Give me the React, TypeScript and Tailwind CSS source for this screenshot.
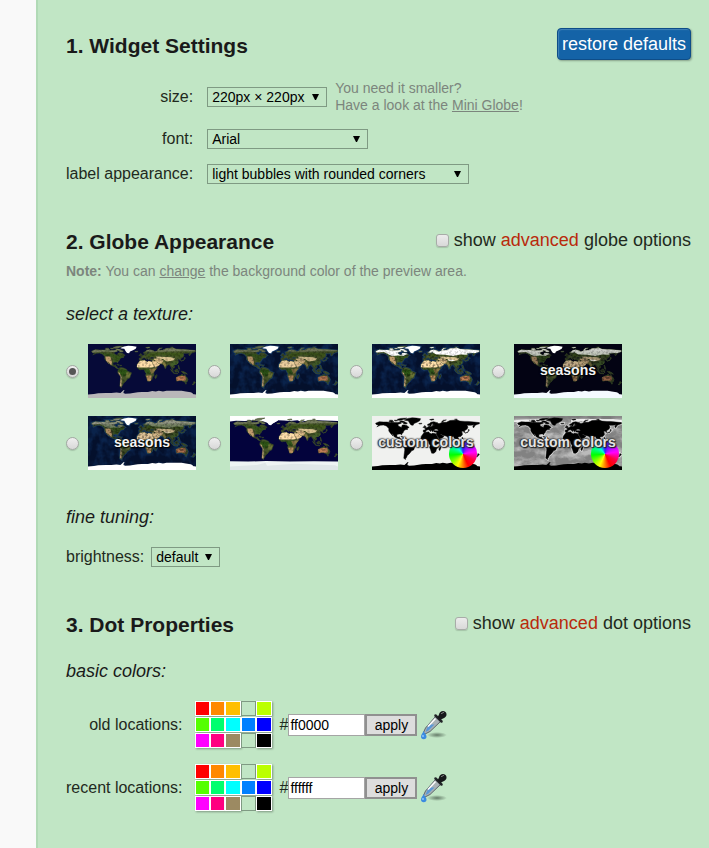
import { useId, type ReactNode } from 'react'

const LAND = [
  // North America
  'M12 24L24 19L38 20L50 20L62 22L72 22L85 22L95 20L98 24L86 28L88 33L98 38L101 30L108 30L116 32L124 38L115 43L120 44L110 46L106 50L104 55L99 60L99 64L96 60L90 60L83 62L83 70L90 71L92 69L92 75L97 76L97 81L102 82L100 83L94 80L88 75L75 70L70 62L66 58L70 67L62 58L56 50L56 42L48 33L38 30L28 31L16 36L22 31L14 28Z',
  // Canadian Arctic islands
  'M56 18L66 17L74 20L64 21ZM58 14L68 14L70 16L60 16ZM74 14L84 14L86 16L78 17ZM84 11L96 8L116 7L108 10L98 14L88 14ZM92 17L104 17L118 24L114 27L104 26L108 23L96 20Z',
  // South America
  'M102 82L108 78L119 80L129 85L130 90L145 96L142 104L139 113L132 116L126 124L122 128L118 131L115 138L112 142L112 145L106 141L107 130L109 115L109 108L102 100L99 95L100 89L103 85Z',
  // Caribbean
  'M96 68L105 70L104 71L97 69ZM107 71L112 71L111 73L107 72Z',
  // Africa
  'M174 54L190 53L191 57L200 60L201 57L212 59L216 66L223 78L231 79L222 90L219 96L220 105L215 110L213 118L207 124L199 124L195 112L192 105L194 98L189 90L189 85L184 84L173 86L167 82L163 76L164 68L170 60Z',
  'M229 102L230 106L226 115L223 113L224 107Z',
  // Eurasia
  'M171 53L171 47L178 47L176 42L182 39L188 36L190 33L195 36L200 35L202 31L210 30L202 29L203 26L205 24L201 26L197 30L198 34L193 34L192 31L186 32L185 28L192 25L196 21L206 19L220 23L217 25L226 25L234 21L248 21L260 15L284 13L293 17L310 18L320 18L340 20L358 22L358 26L350 28L343 32L340 38L337 38L336 33L340 29L330 31L316 31L320 37L317 43L312 47L308 50L309 55L306 54L305 50L301 50L298 51L302 53L299 55L302 60L300 64L296 68L290 69L286 71L289 76L288 79L285 81L281 77L280 78L284 88L283 88L278 80L277 74L274 74L272 68L267 69L260 75L260 80L257 82L253 71L247 67L237 65L230 60L228 60L236 66L240 68L234 73L224 77L219 69L214 60L216 54L207 53L206 50L209 49L222 49L218 45L219 43L213 44L209 43L208 48L204 49L203 53L199 48L194 44L198 50L196 52L189 46L183 47L180 50L178 53Z',
  'M174 40L175 32L178 33L181 38L179 39ZM170 38L173 35L174 37L171 39ZM156 25L166 24L166 26L158 27Z',
  'M192 12L204 10L207 12L198 14ZM232 19L238 14L248 13L240 16L236 20ZM275 11L284 10L283 12Z',
  // Japan, Philippines and Indonesia
  'M310 57L320 54L322 49L325 47L320 45L322 50L318 54ZM300 71L302 72L304 78L306 84L302 83L302 78Z',
  'M275 85L279 87L286 94L285 96L281 93ZM285 97L294 98L300 99L293 99ZM289 88L297 83L299 86L296 94L290 92ZM299 90L304 89L301 92L303 95L300 95ZM311 91L318 92L328 97L331 101L325 98L318 98L313 94Z',
  // Australia, Tasmania and New Zealand
  'M294 112L294 116L296 124L304 122L312 122L318 125L326 129L331 125L333 118L330 112L326 108L323 101L320 107L316 105L316 102L311 102L308 105L303 107ZM325 131L328 131L327 134L325 133ZM353 125L358 128L355 132L351 136L347 135L352 131Z',
].join('')

const GREENLAND =
  'M107 13L120 8L134 6L148 7L162 9L159 16L150 21L140 25L137 31L130 30L125 23L121 16L112 15Z'

const ANTARCTICA =
  'M0 168L20 167L34 164L60 163L78 163L95 162L108 163L112 160L118 154L122 153L119 158L118 163L124 166L140 165L150 163L166 161L180 160L200 160L214 157L226 158L236 156L250 158L262 156L290 156L312 156L326 158L342 161L350 164L348 167L360 168V180H0Z'

type Texture = {
  name: string
  ocean: string
  shelf?: string
  pole: string
  snow?: number
  dim?: number
  caps?: boolean
  mono?: 'plain' | 'relief'
  caption?: string
}

const TEXTURES: Texture[] = [
  { name: 'plain ocean', ocean: '#060a38', pole: '#b9b7b9' },
  { name: 'ocean floor', ocean: '#04102c', shelf: '#1d4a7c', pole: '#ffffff', dim: 0.08 },
  { name: 'ocean floor with snow', ocean: '#04102c', shelf: '#1d4a7c', pole: '#ffffff', snow: 1 },
  { name: 'plain ocean, seasons', ocean: '#030313', pole: '#f4faff', snow: 0.7, dim: 0.25, caption: 'seasons' },
  { name: 'ocean floor, seasons', ocean: '#04102c', shelf: '#1d4a7c', pole: '#ffffff', snow: 0.3, dim: 0.12, caption: 'seasons' },
  { name: 'polar ice', ocean: '#03033c', pole: '#eef4f4', caps: true },
  { name: 'plain custom', ocean: '#f0f1ef', pole: '#000000', mono: 'plain', caption: 'custom colors' },
  { name: 'relief custom', ocean: '#828282', pole: '#000000', mono: 'relief', caption: 'custom colors' },
]

function WorldMap({ texture }: { texture: Texture }) {
  const id = useId().replace(/[^a-zA-Z0-9]/g, '')
  const { ocean, shelf, pole, snow = 0, dim = 0, caps, mono } = texture
  return (
    <svg viewBox="0 0 360 180" className="block h-[54px] w-[108px]" aria-hidden="true">
      <defs>
        <clipPath id={`land${id}`}>
          <path d={LAND} />
        </clipPath>
        <filter id={`soft${id}`} x="-20%" y="-20%" width="140%" height="140%">
          <feGaussianBlur stdDeviation="2" />
        </filter>
        <filter id={`edge${id}`}>
          <feGaussianBlur stdDeviation="1" />
        </filter>
        <filter id={`grain${id}`} x="0" y="0" width="100%" height="100%" colorInterpolationFilters="sRGB">
          <feTurbulence type="fractalNoise" baseFrequency="0.12" numOctaves="2" seed="8" />
          <feColorMatrix values="0 0 0 0 0  0 0 0 0 0  0 0 0 0 0  3 0 0 0 -1.3" />
        </filter>
        <filter id={`relief${id}`} x="0" y="0" width="100%" height="100%" colorInterpolationFilters="sRGB">
          <feTurbulence type="fractalNoise" baseFrequency="0.022 0.035" numOctaves="4" seed="5" />
          <feColorMatrix values="0 0 0 0 1  0 0 0 0 1  0 0 0 0 1  3 0 0 0 -1.2" />
        </filter>
        <filter id={`floor${id}`} x="0" y="0" width="100%" height="100%" colorInterpolationFilters="sRGB">
          <feTurbulence type="fractalNoise" baseFrequency="0.035 0.03" numOctaves="3" seed="3" />
          <feColorMatrix values="0 0 0 0 0.06  0 0 0 0 0.19  0 0 0 0 0.38  3 0 0 0 -1.2" />
        </filter>
      </defs>
      <rect width="360" height="180" fill={ocean} />
      {shelf && (
        <>
          <rect width="360" height="180" filter={`url(#floor${id})`} opacity="0.6" />
          <path d={LAND + GREENLAND} fill="none" stroke={shelf} strokeWidth="6" filter={`url(#soft${id})`} opacity="0.6" />
          <path d="M0 14H360" stroke={shelf} strokeWidth="10" filter={`url(#floor${id})`} opacity="0.4" />
        </>
      )}
      {mono === 'relief' && (
        <>
          <rect width="360" height="180" filter={`url(#relief${id})`} opacity="0.45" />
          <path d={LAND} fill="none" stroke="#ffffff" strokeWidth="7" filter={`url(#soft${id})`} opacity="0.6" />
          <path d="M190 16L250 12L330 14L360 18M0 18L50 16" fill="none" stroke="#ffffff" strokeWidth="8" filter={`url(#soft${id})`} opacity="0.8" />
          <rect width="360" height="9" fill="#777777" opacity="0.7" />
        </>
      )}
      {caps && (
        <path
          d="M0 0H360V17L340 16L310 15L280 13L250 17L236 19L225 14L200 17L180 15L160 14L148 22L136 30L126 23L112 18L80 14L50 17L20 16L0 18Z"
          fill="#ffffff"
          filter={`url(#edge${id})`}
        />
      )}
      {mono ? (
        <path d={LAND + GREENLAND} fill="#000000" stroke="#000000" strokeWidth="1.5" strokeLinejoin="round" />
      ) : (
        <>
          <path d={LAND} fill="#465629" stroke="#3b4b2a" strokeWidth="2" strokeLinejoin="round" />
          <g clipPath={`url(#land${id})`}>
            <g filter={`url(#soft${id})`}>
              {/* tundra */}
              <path d="M0 4H360V24L300 24L240 26L190 25L120 30L60 25L0 30Z" fill="#737a5a" />
              {/* boreal and tropical forest */}
              <path d="M40 30L84 33L120 42L106 50L96 60L88 58L84 44L60 38Z" fill="#37551f" />
              <path d="M190 32L260 28L320 30L312 46L290 40L240 36L200 44Z" fill="#41591f" />
              <path d="M100 84L128 86L134 98L120 108L106 102Z" fill="#2d5517" />
              <path d="M168 82L206 84L212 92L204 100L192 98L186 86Z" fill="#33561a" />
              <path d="M278 60L300 56L300 68L286 72L276 72Z" fill="#45602a" />
              {/* dry land */}
              <path d="M58 42L74 42L80 58L78 70L68 68L60 54Z" fill="#c09c6c" />
              <path d="M158 57L196 54L220 58L226 76L210 78L160 78Z" fill="#ffe0ab" />
              <path d="M212 54L242 62L242 72L224 80L214 66Z" fill="#f2d09a" />
              <path d="M216 48L240 48L252 56L246 66L230 60Z" fill="#d8b985" />
              <path d="M226 42L276 44L290 48L284 55L262 58L250 50L230 48Z" fill="#dcc592" />
              <path d="M246 60L258 62L262 74L254 76Z" fill="#80783f" />
              <path d="M204 84L230 80L220 94L212 100Z" fill="#8c7a44" />
              <path d="M194 106L212 104L210 124L196 124Z" fill="#b98f5c" />
              <path d="M100 94L106 96L112 112L112 142L106 142L106 112Z" fill="#bea078" />
              <path d="M128 94L144 96L138 112L126 112Z" fill="#6b7436" />
              <path d="M292 108L324 106L326 122L294 124Z" fill="#bf7d54" />
            </g>
            <rect width="360" height="180" filter={`url(#grain${id})`} opacity="0.28" />
          </g>
          {dim > 0 && <path d={LAND} fill="#000010" opacity={dim} />}
          {snow > 0 && (
            <g clipPath={`url(#land${id})`}>
              <g filter={`url(#soft${id})`} opacity={snow}>
                <path d="M0 10H124L126 32L112 36L104 40L88 38L66 40L54 34L40 27L10 28Z" fill="#ffffff" />
                <path d="M190 8H360V30L330 31L314 36L296 35L270 40L244 36L214 35L204 29L188 28Z" fill="#ffffff" />
                <path d="M252 52L276 53L270 57L256 56Z" fill="#ffffff" />
              </g>
              <rect width="360" height="180" filter={`url(#grain${id})`} opacity="0.22" />
            </g>
          )}
          <path d={GREENLAND} fill="#ffffff" filter={`url(#edge${id})`} />
        </>
      )}
      <path d={caps ? 'M0 151L60 152L120 150L200 152L280 151L360 152V180H0Z' : ANTARCTICA} fill={pole} filter={`url(#edge${id})`} />
      {caps && <path d="M0 168L90 163L118 156L124 166L214 159L350 164L360 168V180H0Z" fill="#dfe7e8" />}
      {mono && <rect y="170" width="360" height="10" fill="#000000" />}
    </svg>
  )
}

function TextureOption({ texture, selected }: { texture: Texture; selected: boolean }) {
  return (
    <label className="flex items-center gap-[9px]">
      <input
        type="radio"
        name="texture"
        defaultChecked={selected}
        aria-label={texture.name}
        className="grid size-[13px] shrink-0 appearance-none place-items-center rounded-full border border-[#a3a8a3] bg-linear-to-b from-[#efefef] to-[#d8d8d8] shadow-[0_1px_1px_rgba(0,0,0,0.15)] before:size-[7px] before:rounded-full checked:before:bg-[#555555]"
      />
      <span className="relative block overflow-hidden">
        <WorldMap texture={texture} />
        {texture.mono && (
          <span className="absolute right-[3px] bottom-[2px] size-[28px] rounded-full bg-[conic-gradient(#3020ff,#ff00ff_80deg,#ff0040_120deg,#ff0000_155deg,#ffff00_205deg,#00ff00_265deg,#00ffe0_320deg,#3020ff)]" />
        )}
        {texture.caption && (
          <span
            className={
              texture.mono
                ? 'absolute inset-0 text-center text-[14px] leading-[53px] font-bold whitespace-nowrap text-[#e4e4e4] [text-shadow:0_0_2px_#222,0_0_2px_#222,1px_1px_1px_#222,-1px_0_1px_#444]'
                : 'absolute inset-0 text-center text-[14px] leading-[53px] font-bold whitespace-nowrap text-[#f4f4f4] [text-shadow:0_0_2px_#000,1px_1px_1px_#000]'
            }
          >
            {texture.caption}
          </span>
        )}
      </span>
    </label>
  )
}

function Dropdown({ id, value, options, width }: { id: string; value: string; options: string[]; width: string }) {
  return (
    <span className={`relative block h-[20px] ${width}`}>
      <select
        id={id}
        defaultValue={value}
        className="block h-full w-full appearance-none border border-[#7f9a83] bg-transparent pl-1 text-[14px] leading-[18px] text-black"
      >
        {options.map((option) => (
          <option key={option}>{option}</option>
        ))}
      </select>
      <svg viewBox="0 0 7 7" className="pointer-events-none absolute top-[7px] right-[8px] size-[7px]" aria-hidden="true">
        <path d="M0 0H7L4 6H3Z" fill="#000000" />
      </svg>
    </span>
  )
}

function AdvancedToggle({ id, subject }: { id: string; subject: string }) {
  return (
    <div className="flex items-center gap-[5px] text-[18px] leading-[24px]">
      <input
        id={id}
        type="checkbox"
        className="size-[13px] appearance-none rounded-[3px] border border-[#a8aca8] bg-linear-to-b from-[#ececec] to-[#d9d9d9] shadow-[0_1px_1px_rgba(0,0,0,0.15)] checked:bg-[#555555]"
      />
      <label htmlFor={id}>
        show <span className="text-[#b92a0c]">advanced</span> {subject} options
      </label>
    </div>
  )
}

function SectionHeader({ title, children }: { title: string; children: ReactNode }) {
  return (
    <div className="flex items-start justify-between">
      <h2 className="pt-[2px] text-[21px] leading-[24px] font-bold text-[#1a1a1a]">{title}</h2>
      {children}
    </div>
  )
}

const SWATCHES = [
  '#ff0000', '#ff8800', '#ffbf00', '', '#bbff00',
  '#55ff00', '#00ff6e', '#00ffff', '#0080ff', '#0000ff',
  '#ff00ff', '#ff0080', '#9c8a62', '', '#000000',
]

function Eyedropper() {
  const id = useId().replace(/[^a-zA-Z0-9]/g, '')
  return (
    <svg viewBox="0 0 28 30" className="block h-[30px] w-[28px]" aria-hidden="true">
      <defs>
        <radialGradient id={id}>
          <stop offset="0" stopColor="#3d4d40" stopOpacity="0.7" />
          <stop offset="1" stopColor="#3d4d40" stopOpacity="0" />
        </radialGradient>
      </defs>
      <ellipse cx="17" cy="25" rx="10" ry="3" fill={`url(#${id})`} />
      <path d="M15.500 6.500L20.500 11.500L10 21.500L5 24L3.500 22.500L5.500 18Z" fill="#a9b2b6" stroke="#5d666b" strokeWidth="1" strokeLinejoin="round" />
      <path d="M9.500 14.500L14.500 14.500L8.500 20.500L5.500 22L7 18Z" fill="#5b97d6" />
      <path d="M15.500 8.500L8 16.500" stroke="#ffffff" strokeWidth="1.500" />
      <path d="M15.500 5.500L21.500 11.500" stroke="#222528" strokeWidth="2.500" strokeLinecap="round" />
      <path d="M17.500 7.500L19 4.500C19.500 1 23.500 0 25.500 2C27.500 4 26.500 7.500 23 8.500L20 10Z" fill="#17191b" />
      <path d="M21.500 3.500L23.500 2.500" stroke="#888888" strokeWidth="1" strokeLinecap="round" />
      <path d="M3.500 21C5 23.500 6.500 24.500 6.500 26.500A2.700 2.700 0 0 1 1 26.500C1 24.500 2.500 23.500 3.500 21Z" fill="#3b8be0" />
      <circle cx="3" cy="26" r="1" fill="#8fc4fa" />
    </svg>
  )
}

function ColorRow({ id, label, value }: { id: string; label: string; value: string }) {
  return (
    <>
      <label htmlFor={id} className="text-right">
        {label}
      </label>
      <div className="flex items-center">
        <div className="grid w-[77px] grid-cols-5 gap-y-px">
          {SWATCHES.map((color, index) => (
            <button
              key={index}
              type="button"
              aria-label={color ? `${label} ${color}` : `${label} none`}
              style={{ backgroundColor: color || undefined }}
              className={
                color
                  ? 'h-[15px] border border-white shadow-[1px_1px_2px_rgba(0,0,0,0.35)]'
                  : 'h-[15px] border border-[#7f9a83] bg-[#c1e6c5]'
              }
            />
          ))}
        </div>
        <span className="ml-2">#</span>
        <input
          id={id}
          type="text"
          defaultValue={value}
          className="h-[22px] w-[77px] border border-[#a5a5a5] bg-white px-px text-[14px] text-black"
        />
        <button type="button" className="h-[22px] w-[52px] border-2 border-[#909090] bg-[#dddddd] text-[14px] leading-[18px] text-black">
          apply
        </button>
        <button type="button" aria-label={`pick ${label}`} className="ml-[3px]">
          <Eyedropper />
        </button>
      </div>
    </>
  )
}

export default function App() {
  return (
    <div className="flex min-h-screen bg-[#f9f9f9] font-['Liberation_Sans',Arial,sans-serif] text-[16px] leading-[20px] text-[#1f2a20]">
      <main className="ml-9 flex-1 border-l-2 border-[#b1dab6] bg-[#c1e6c5] pt-7 pr-[18px] pb-9 pl-7">
        <section>
          <div className="flex items-center justify-between">
            <h2 className="pt-[3px] text-[21px] leading-[24px] font-bold text-[#1a1a1a]">1. Widget Settings</h2>
            <button
              type="button"
              className="h-[32px] rounded-[4px] border border-[#0e4d88] bg-[#1463a7] px-1 text-[18px] leading-[30px] text-white shadow-[1px_1px_2px_rgba(0,0,0,0.3),inset_1px_1px_1px_rgba(255,255,255,0.2)]"
            >
              restore defaults
            </button>
          </div>
          <div className="mt-5 grid grid-cols-[auto_1fr] items-center gap-x-[14px] gap-y-[15px]">
            <label htmlFor="size" className="text-right">size:</label>
            <div className="flex items-center gap-2">
              <Dropdown id="size" value="220px × 220px" options={['220px × 220px', '180px × 180px']} width="w-[120px]" />
              <p className="text-[14px] leading-[17px] text-[#7c857d]">
                You need it smaller?
                <br />
                Have a look at the <a href="#mini" className="underline">Mini Globe</a>!
              </p>
            </div>
            <label htmlFor="font" className="text-right">font:</label>
            <Dropdown id="font" value="Arial" options={['Arial', 'Verdana', 'Georgia']} width="w-[161px]" />
            <label htmlFor="appearance" className="text-right">label appearance:</label>
            <Dropdown
              id="appearance"
              value="light bubbles with rounded corners"
              options={['light bubbles with rounded corners', 'dark bubbles']}
              width="w-[262px]"
            />
          </div>
        </section>

        <section className="mt-11">
          <SectionHeader title="2. Globe Appearance">
            <AdvancedToggle id="advanced-globe" subject="globe" />
          </SectionHeader>
          <p className="mt-[7px] text-[14px] leading-[20px] text-[#7c857d]">
            <b>Note:</b> You can <a href="#background" className="underline">change</a> the background color of the preview area.
          </p>
          <h3 className="mt-[21px] text-[18px] leading-[24px] text-[#1a1a1a] italic">select a texture:</h3>
          <div className="mt-[18px] grid grid-cols-[repeat(4,max-content)] gap-x-3 gap-y-[18px]">
            {TEXTURES.map((texture, index) => (
              <TextureOption key={texture.name} texture={texture} selected={index === 0} />
            ))}
          </div>
          <h3 className="mt-[35px] text-[18px] leading-[24px] text-[#1a1a1a] italic">fine tuning:</h3>
          <div className="mt-[18px] flex items-center gap-[7px]">
            <label htmlFor="brightness">brightness:</label>
            <Dropdown id="brightness" value="default" options={['default', 'bright', 'dark']} width="w-[69px]" />
          </div>
        </section>

        <section className="mt-11">
          <SectionHeader title="3. Dot Properties">
            <AdvancedToggle id="advanced-dot" subject="dot" />
          </SectionHeader>
          <h3 className="mt-[22px] text-[18px] leading-[24px] text-[#1a1a1a] italic">basic colors:</h3>
          <div className="mt-[18px] grid grid-cols-[auto_1fr] items-center gap-x-3 gap-y-4">
            <ColorRow id="old-color" label="old locations:" value="ff0000" />
            <ColorRow id="recent-color" label="recent locations:" value="ffffff" />
          </div>
        </section>
      </main>
    </div>
  )
}
